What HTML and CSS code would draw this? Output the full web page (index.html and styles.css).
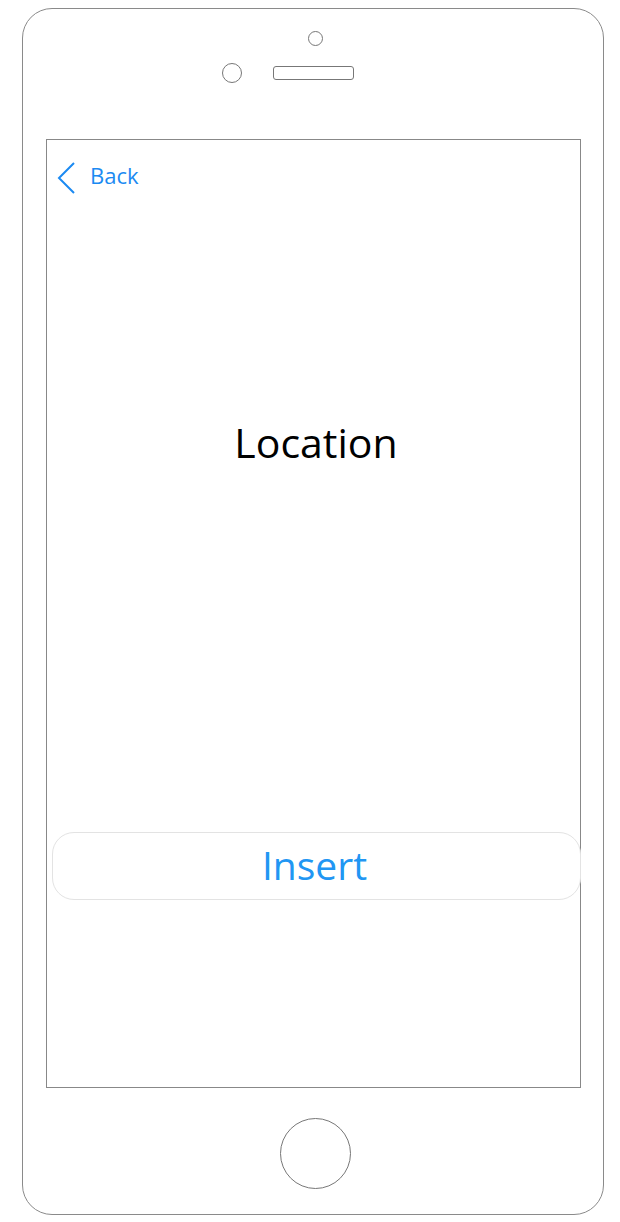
FILE: index.html
```html
<!DOCTYPE html>
<html>
<head>
<meta charset="utf-8">
<link rel="stylesheet" href="styles.css">
</head>
<body>
<div class="phone">
  <div class="top">
    <div class="camera"></div>
    <div class="sensors">
      <div class="sensor"></div>
      <div class="speaker"></div>
    </div>
  </div>
  <div class="screen">
    <div class="nav">
      <svg class="chev" width="20" height="32" viewBox="0 0 20 32"><path d="M18 1 L3 16 L18 31" fill="none" stroke="#1b8af2" stroke-width="2"/></svg>
      <span class="back">Back</span>
    </div>
    <h1 class="title">Location</h1>
    <button class="insert">Insert</button>
  </div>
  <div class="bottom">
    <div class="home"></div>
  </div>
</div>
</body>
</html>
```
FILE: styles.css
```css
html, body { margin: 0; padding: 0; background: #fff; }
body { width: 620px; height: 1222px; font-family: "Open Sans", sans-serif; }
.phone {
  box-sizing: border-box;
  margin: 8px 0 0 22px;
  width: 582px;
  height: 1207px;
  border: 1px solid #8a8a8a;
  border-radius: 30px;
}
.top { box-sizing: border-box; height: 130px; padding-top: 22px; }
.camera {
  box-sizing: border-box;
  width: 15px; height: 15px;
  margin-left: 285px;
  border: 1px solid #777;
  border-radius: 50%;
}
.sensors { display: flex; align-items: center; margin: 17px 0 0 199px; gap: 31px; }
.sensor {
  box-sizing: border-box;
  width: 20px; height: 20px;
  border: 1px solid #777;
  border-radius: 50%;
}
.speaker {
  box-sizing: border-box;
  width: 81px; height: 14px;
  border: 1px solid #777;
  border-radius: 3px;
}
.screen {
  box-sizing: border-box;
  margin-left: 23px;
  width: 535px;
  height: 949px;
  border: 1px solid #888;
  display: flex;
  flex-direction: column;
}
.nav { display: flex; align-items: center; margin: 22px 0 0 9px; height: 32px; }
.chev { display: block; }
.back { margin-left: 14px; font-size: 22px; color: #1b8af2; line-height: 1; margin-top: -7px; }
.title {
  margin: 222px 0 0 0;
  padding-left: 5px;
  text-align: center;
  font-weight: 400;
  font-size: 41px;
  line-height: 52px;
  color: #000;
}
.insert {
  box-sizing: border-box;
  margin: 364px 0 0 5px;
  width: 529px;
  height: 68px;
  border: 1px solid #e3e3e3;
  border-radius: 22px;
  background: #fff;
  font-family: "Open Sans", sans-serif;
  font-size: 39px;
  color: #2196f3;
  padding: 0 4px 4px 0;
}
.bottom { display: flex; justify-content: center; padding-top: 30px; }
.home {
  box-sizing: border-box;
  width: 71px; height: 71px;
  margin-left: 4px;
  border: 1.5px solid #777;
  border-radius: 50%;
}
```
